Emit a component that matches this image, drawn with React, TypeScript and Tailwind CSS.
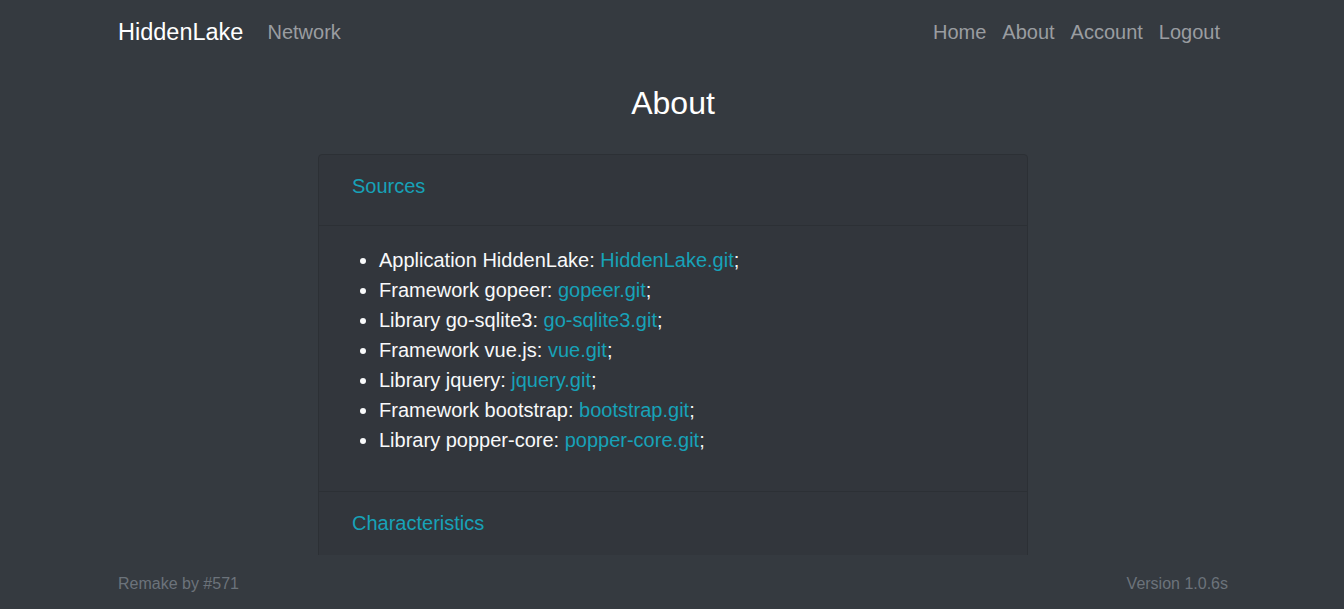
const sources: [string, string][] = [
  ["Application HiddenLake", "HiddenLake.git"],
  ["Framework gopeer", "gopeer.git"],
  ["Library go-sqlite3", "go-sqlite3.git"],
  ["Framework vue.js", "vue.git"],
  ["Library jquery", "jquery.git"],
  ["Framework bootstrap", "bootstrap.git"],
  ["Library popper-core", "popper-core.git"],
];

export default function App() {
  return (
    <div
      className="flex h-[609px] flex-col overflow-hidden bg-[#353a40] pl-[2px] text-[#f8f9fa]"
      style={{ fontFamily: '"Liberation Sans", Arial, sans-serif' }}
    >
      <header className="mx-auto flex h-16 w-[1110px] shrink-0 items-center justify-between">
        <div className="flex items-center">
          <a className="text-[23.5px] leading-[36px] text-white">HiddenLake</a>
          <a className="ml-[16px] px-2 text-[20px] leading-[30px] text-[#9a9da1]">Network</a>
        </div>
        <nav className="flex items-center">
          {["Home", "About", "Account", "Logout"].map((l) => (
            <a key={l} className="px-2 text-[20px] leading-[30px] text-[#9a9da1]">
              {l}
            </a>
          ))}
        </nav>
      </header>

      <main className="flex-1 overflow-hidden">
        <h1 className="mt-[20px] mb-[32px] text-center text-[32px] leading-[38px] text-white">About</h1>
        <div className="mx-auto w-[710px] rounded-[4px] border border-[#2c3035] bg-[#32363c]">
          <div className="border-b border-[#2c3035] px-[33px] pt-[19px] pb-[27px] text-[20px] leading-[24px] text-[#17a2b8]">
            Sources
          </div>
          <div className="px-[33px] pt-[19px] pb-[20px]">
            <ul className="mb-4 list-disc pl-[27px] text-[20px] leading-[30px]">
              {sources.map(([label, link]) => (
                <li key={link}>
                  {label}: <a className="text-[#17a2b8]">{link}</a>;
                </li>
              ))}
            </ul>
          </div>
          <div className="border-t border-[#2c3035] px-[33px] pt-[19px] pb-[28px] text-[20px] leading-[24px] text-[#17a2b8]">
            Characteristics
          </div>
          <div className="h-[200px]" />
        </div>
      </main>

      <footer className="mx-auto flex h-[54px] w-[1110px] shrink-0 items-center justify-between pt-[4px] text-[16px] text-[#6c737b]">
        <span>Remake by #571</span>
        <span>Version 1.0.6s</span>
      </footer>
    </div>
  );
}
